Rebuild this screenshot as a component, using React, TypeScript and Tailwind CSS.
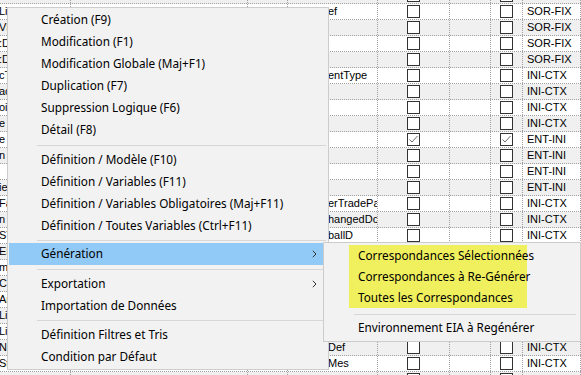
import React from "react";

type Row = { l: string; d: string; c: boolean; s: string };

const rows: Row[] = [
  { l: "", d: "", c: false, s: "SOR-FIX" },
  { l: "Li", d: "ef", c: false, s: "SOR-FIX" },
  { l: "VE", d: "", c: false, s: "SOR-FIX" },
  { l: ":D", d: "", c: false, s: "SOR-FIX" },
  { l: ":D", d: "", c: false, s: "SOR-FIX" },
  { l: "cT", d: "entType", c: false, s: "INI-CTX" },
  { l: "ac", d: "", c: false, s: "INI-CTX" },
  { l: "oi", d: "", c: false, s: "INI-CTX" },
  { l: "e", d: "", c: false, s: "INI-CTX" },
  { l: "e", d: "", c: true, s: "ENT-INI" },
  { l: "n", d: "", c: false, s: "ENT-INI" },
  { l: "", d: "", c: false, s: "ENT-INI" },
  { l: "ie", d: "", c: false, s: "ENT-INI" },
  { l: "Fa", d: "erTradePa", c: false, s: "INI-CTX" },
  { l: "n", d: "hangedDc", c: false, s: "INI-CTX" },
  { l: "ST", d: "ballD", c: false, s: "INI-CTX" },
  { l: "ED", d: "", c: false, s: "INI-CTX" },
  { l: "m", d: "", c: false, s: "INI-CTX" },
  { l: "Co", d: "", c: false, s: "INI-CTX" },
  { l: "Ar", d: "", c: false, s: "INI-CTX" },
  { l: "Li", d: "", c: false, s: "INI-CTX" },
  { l: "Li", d: "", c: false, s: "INI-CTX" },
  { l: "N", d: "Def", c: false, s: "INI-CTX" },
  { l: "St", d: "Mes", c: false, s: "INI-CTX" },
  { l: "", d: "", c: false, s: "INI-CTX" },
];

function Box({ checked }: { checked: boolean }) {
  return (
    <div className="w-[13px] h-[13px] border border-[#333333] bg-white flex items-start justify-start">
      {checked && (
        <svg width="11" height="11" viewBox="0 0 11 11" className="block">
          <path d="M1.5 5.5 L4 8 L9.5 2" stroke="#6a6a6a" strokeWidth="1" fill="none" />
        </svg>
      )}
    </div>
  );
}

const cell = "h-full border-r border-dotted border-[#a0a0a0] shrink-0";

function GridRow({ r, i }: { r: Row; i: number }) {
  return (
    <div
      className={`flex h-[16px] border-b border-dotted border-[#a0a0a0] text-[11px] leading-[15px] text-black ${
        i % 2 === 0 ? "bg-[#f0f0f0]" : "bg-white"
      }`}
    >
      <div className={`${cell} w-[71px] overflow-hidden whitespace-nowrap -indent-[1px]`}>{r.l}</div>
      <div className={`${cell} w-[177px]`} />
      <div className={`${cell} w-[40px]`} />
      <div className={`${cell} w-[90px] overflow-hidden whitespace-nowrap pl-[40px]`}>{r.d}</div>
      <div className={`${cell} w-[72px] flex items-center justify-center`}>
        <Box checked={r.c} />
      </div>
      <div className={`${cell} w-[41px]`} />
      <div className={`${cell} w-[32px] flex items-center justify-center`}>
        <Box checked={r.c} />
      </div>
      <div className={`${cell} w-[58px] pl-[4px] whitespace-nowrap overflow-hidden`}>{r.s}</div>
      <div className="h-full flex-1" />
    </div>
  );
}

function Chevron() {
  return (
    <svg width="5" height="8" viewBox="0 0 5 8" className="block">
      <path d="M0.8 0.8 L4 4 L0.8 7.2" stroke="#333333" strokeWidth="1" fill="none" />
    </svg>
  );
}

function Item({ label, active, sub }: { label: string; active?: boolean; sub?: boolean }) {
  return (
    <div
      className={`h-[22px] flex items-center pl-[32px] pr-[10px] whitespace-nowrap ${
        active ? "bg-[#91c9f7]" : ""
      }`}
    >
      <span className="flex-1">{label}</span>
      {sub && <Chevron />}
    </div>
  );
}

function Sep({ h, top }: { h: string; top: string }) {
  return (
    <div className={`${h} ${top} pl-[28px] pr-[1px]`}>
      <div className="h-px bg-[#d7d7d7]" />
    </div>
  );
}

export default function App() {
  return (
    <div className="relative w-[581px] h-[375px] overflow-hidden bg-white font-['Liberation_Sans',Arial,sans-serif]">
      <div className="-mt-[12px]">
        {rows.map((r, i) => (
          <GridRow key={i} r={r} i={i} />
        ))}
      </div>

      {/* Main context menu */}
      <div className="absolute left-[7px] top-[7px] w-[322px] border border-[#cccccc] bg-[#f2f2f2] py-[1px] px-[1px] text-[11.75px] text-black font-['Noto_Sans',sans-serif]">
        <Item label="Création (F9)" />
        <Item label="Modification (F1)" />
        <Item label="Modification Globale (Maj+F1)" />
        <Item label="Duplication (F7)" />
        <Item label="Suppression Logique (F6)" />
        <Item label="Détail (F8)" />
        <Sep h="h-[8px]" top="pt-[4px]" />
        <Item label="Définition / Modèle (F10)" />
        <Item label="Définition / Variables (F11)" />
        <Item label="Définition / Variables Obligatoires (Maj+F11)" />
        <Item label="Définition / Toutes Variables (Ctrl+F11)" />
        <Sep h="h-[6px]" top="pt-[3px]" />
        <Item label="Génération" active sub />
        <Sep h="h-[8px]" top="pt-[4px]" />
        <Item label="Exportation" sub />
        <Item label="Importation de Données" />
        <Sep h="h-[7px]" top="pt-[3px]" />
        <Item label="Définition Filtres et Tris" />
        <Item label="Condition par Défaut" />
      </div>

      {/* Submenu */}
      <div className="absolute left-[323px] top-[242px] w-[258px] border border-[#cccccc] bg-[#f2f2f2] pt-[2px] pb-[2px] text-[11.75px] text-black font-['Noto_Sans',sans-serif]">
        <div className="ml-[25px] w-[178px] bg-[#f0f05e]">
          <div className="h-[21px] flex items-center pl-[9px] whitespace-nowrap">Correspondances Sélectionnées</div>
          <div className="h-[21px] flex items-center pl-[9px] whitespace-nowrap">Correspondances à Re-Générer</div>
          <div className="h-[21px] flex items-center pl-[9px] whitespace-nowrap">Toutes les Correspondances</div>
        </div>
        <div className="pt-[6px] pb-[2px] pl-[30px] pr-[4px]">
          <div className="h-px bg-[#d7d7d7]" />
        </div>
        <div className="h-[22px] flex items-center pl-[34px] whitespace-nowrap">Environnement EIA à Regénérer</div>
      </div>
    </div>
  );
}
